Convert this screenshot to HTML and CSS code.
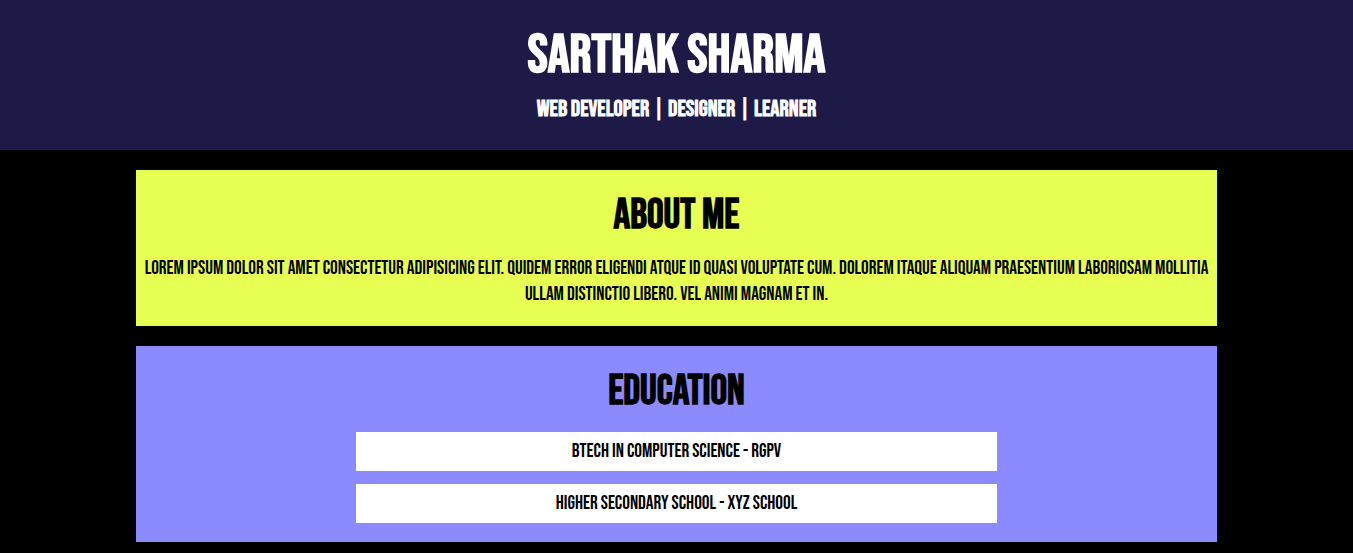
FILE: index.html
```html
<!DOCTYPE html>
<html>
<head>
<meta charset="utf-8">
<title>Sarthak Sharma</title>
<link rel="stylesheet" href="styles.css">
</head>
<body>
<header class="site-header">
  <h1 class="name">Sarthak Sharma</h1>
  <p class="tagline">Web Developer | Designer | Learner</p>
</header>
<main class="content">
  <section class="card card-about">
    <h2 class="card-title">About Me</h2>
    <p class="about-text">Lorem ipsum dolor sit amet consectetur adipisicing elit. Quidem error eligendi atque id quasi voluptate cum. Dolorem itaque aliquam praesentium laboriosam mollitia ullam distinctio libero. Vel animi magnam et in.</p>
  </section>
  <section class="card card-education">
    <h2 class="card-title">Education</h2>
    <ul class="edu-list">
      <li class="edu-item">BTech in Computer Science - RGPV</li>
      <li class="edu-item">Higher Secondary School - XYZ School</li>
    </ul>
  </section>
</main>
</body>
</html>
```
FILE: styles.css
```css
* { box-sizing: border-box; }
html, body { margin: 0; padding: 0; }
body {
  background: #000;
  font-family: "Bebas Neue", "Oswald", "Liberation Sans Narrow", sans-serif;
  text-transform: uppercase;
  color: #000;
}
.site-header {
  background: #1e1a47;
  color: #fff;
  height: 150px;
  padding-top: 27px;
  text-align: center;
}
.name {
  margin: 0;
  font-size: 54.5px;
  font-weight: 700;
  line-height: 58px;
}
.tagline {
  margin: 11px 0 0;
  font-size: 23px;
  font-weight: 700;
  line-height: 26px;
}
.content {
  padding: 20px 0 10px;
}
.card {
  width: 1081px;
  margin: 0 auto 20px;
  padding: 22px 6px 18px;
  text-align: center;
}
.card-about { background: #e6ff52; }
.card-education { background: #8b8bff; padding-bottom: 19px; }
.card-title {
  margin: 0 0 16px;
  font-size: 41.5px;
  font-weight: 700;
  line-height: 48px;
}
.about-text {
  margin: 0;
  font-size: 19.2px;
  line-height: 26px;
}
.edu-list {
  list-style: none;
  margin: 0 auto;
  padding: 0;
  width: 641px;
  display: flex;
  flex-direction: column;
  gap: 13px;
}
.edu-item {
  background: #fff;
  font-size: 19.2px;
  line-height: 25px;
  padding: 7px 0;
}
```
